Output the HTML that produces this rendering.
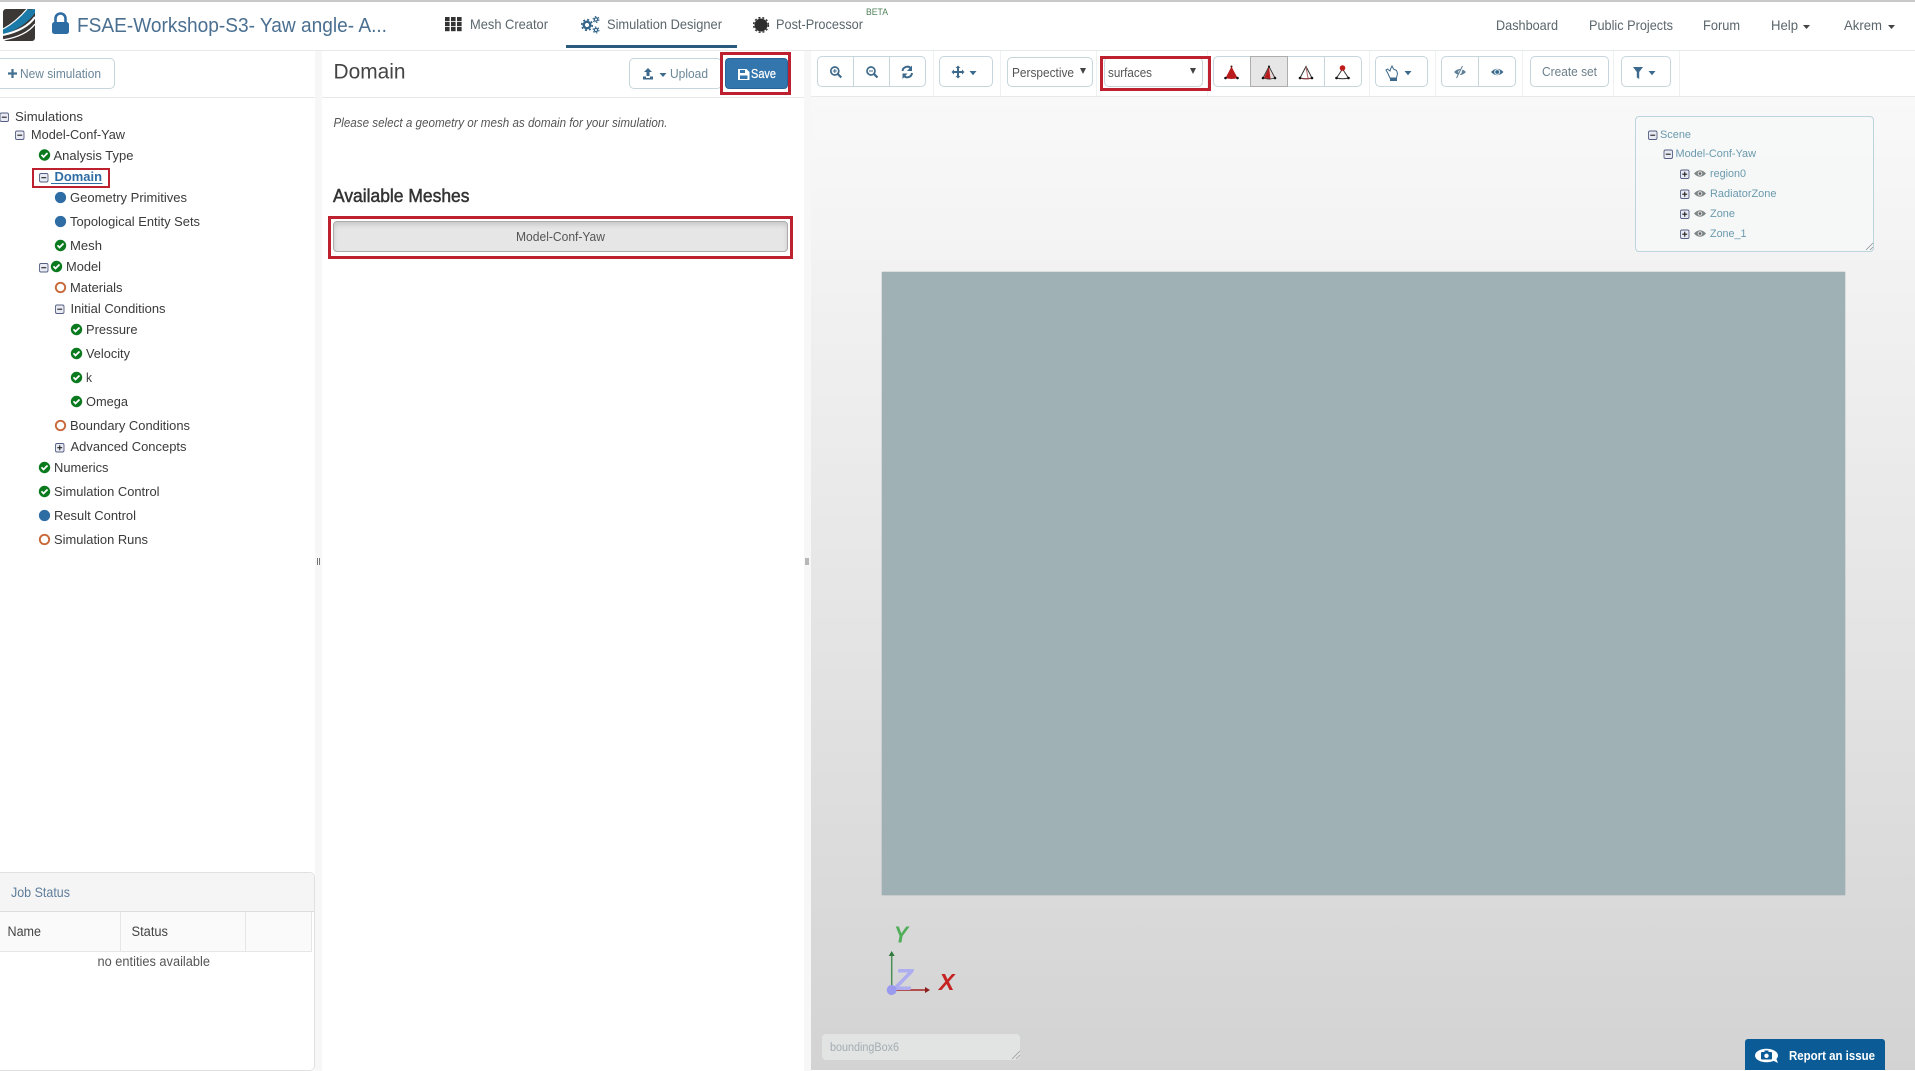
<!DOCTYPE html>
<html lang="en"><head><meta charset="utf-8"><title>Simulation Designer</title>
<style>
html,body{margin:0;padding:0;width:1915px;height:1071px;overflow:hidden;background:#fff}
.b{position:absolute;box-sizing:border-box}
.btn{border:1px solid #c6d6dc;border-radius:5px;background:#fff}
.red{border:3px solid #bd2130;background:transparent}
svg{position:absolute;left:0;top:0}
text{font-family:"Liberation Sans",Arial,sans-serif;font-size:13px;fill:#3a3a3a}
.nav{font-size:14px;fill:#5a666c}
.scene{font-size:11px;fill:#6a9aad}
.d{top:51px;width:1px;height:45px;background:#eef0f1}
</style></head><body>
<!-- backgrounds -->
<div class="b" style="left:0;top:0;width:1915px;height:2px;background:#c8c8c8"></div>
<div class="b" style="left:0;top:50px;width:1915px;height:1px;background:#e6e9ea"></div>
<div class="b" style="left:566px;top:45px;width:171px;height:3px;background:#2a5a7c"></div>
<div class="b" style="left:315px;top:51px;width:7px;height:1020px;background:#f7f7f7"></div>
<div class="b" style="left:804px;top:51px;width:7px;height:1020px;background:#f7f7f7"></div>
<div class="b" style="left:0;top:97px;width:315px;height:1px;background:#e6e9ea"></div>
<div class="b" style="left:322px;top:97px;width:482px;height:1px;background:#e6e9ea"></div>
<div class="b" style="left:811px;top:96px;width:1104px;height:974px;background:linear-gradient(#f9f9f9,#d3d3d3);border-top:1px solid #e8eaea"></div>
<div class="b" style="left:882px;top:272px;width:963px;height:623px;background:#9fb1b5;box-shadow:0 0 1px #7d8d90"></div>
<!-- toolbar dividers -->
<div class="b d" style="left:933px"></div>
<div class="b d" style="left:1000px"></div>
<div class="b d" style="left:1096px"></div>
<div class="b d" style="left:1207px"></div>
<div class="b d" style="left:1369px"></div>
<div class="b d" style="left:1435px"></div>
<div class="b d" style="left:1522px"></div>
<div class="b d" style="left:1613px"></div>
<div class="b d" style="left:1679px"></div>
<!-- left/center buttons -->
<div class="b btn" style="left:-5px;top:58px;width:120px;height:31px"></div>
<div class="b btn" style="left:629px;top:58px;width:93px;height:31px"></div>
<div class="b" style="left:725px;top:58px;width:63px;height:31px;background:#3375ad;border:1px solid #2a6496;border-radius:4px"></div>
<div class="b red" style="left:720px;top:52px;width:71px;height:43px"></div>
<div class="b" style="left:333px;top:221px;width:455px;height:31px;background:#e6e6e6;border:1px solid #adadad;border-radius:4px;box-shadow:inset 0 3px 5px rgba(0,0,0,.125)"></div>
<div class="b red" style="left:328px;top:216px;width:465px;height:43px"></div>
<div class="b red" style="left:32px;top:168px;width:78px;height:20px;border-width:2.5px"></div>
<!-- toolbar buttons -->
<div class="b btn" style="left:817px;top:56px;width:109px;height:31px"></div>
<div class="b" style="left:853px;top:56px;width:1px;height:31px;background:#c6d6dc"></div>
<div class="b" style="left:889px;top:56px;width:1px;height:31px;background:#c6d6dc"></div>
<div class="b btn" style="left:939px;top:56px;width:54px;height:31px"></div>
<div class="b btn" style="left:1007px;top:57px;width:86px;height:30px"></div>
<div class="b btn" style="left:1104px;top:57px;width:99px;height:30px"></div>
<div class="b red" style="left:1100px;top:56px;width:111px;height:35px"></div>
<div class="b btn" style="left:1213px;top:56px;width:149px;height:31px"></div>
<div class="b" style="left:1250px;top:56px;width:38px;height:31px;background:#e6e6e6;border:1px solid #adadad"></div>
<div class="b" style="left:1324px;top:56px;width:1px;height:31px;background:#c6d6dc"></div>
<div class="b btn" style="left:1375px;top:56px;width:53px;height:31px"></div>
<div class="b btn" style="left:1441px;top:56px;width:75px;height:31px"></div>
<div class="b" style="left:1478px;top:56px;width:1px;height:31px;background:#c6d6dc"></div>
<div class="b btn" style="left:1530px;top:56px;width:79px;height:31px"></div>
<div class="b btn" style="left:1621px;top:56px;width:50px;height:31px"></div>
<!-- scene panel -->
<div class="b" style="left:1635px;top:116px;width:239px;height:136px;border:1px solid #bcd4dc;border-radius:4px;background:rgba(246,247,247,.8)"></div>
<!-- bounding box -->
<div class="b" style="left:822px;top:1034px;width:198px;height:26px;background:#e2e3e3;border-radius:4px"></div>
<!-- job status -->
<div class="b" style="left:-5px;top:872px;width:320px;height:199px;border:1px solid #e0e0e0;border-radius:5px;background:#fff"></div>
<div class="b" style="left:-4px;top:873px;width:318px;height:39px;background:#f5f5f5;border-bottom:1px solid #ddd;border-radius:4px 4px 0 0"></div>
<div class="b" style="left:-4px;top:912px;width:316px;height:40px;background:#fafafa;border-bottom:1px solid #e6e6e6;border-right:1px solid #e6e6e6"></div>
<div class="b" style="left:120px;top:912px;width:1px;height:40px;background:#e6e6e6"></div>
<div class="b" style="left:245px;top:912px;width:1px;height:40px;background:#e6e6e6"></div>
<!-- report -->
<div class="b" style="left:1745px;top:1039px;width:140px;height:31px;background:#0b5c96;border-radius:3px 3px 0 0"></div>

<svg width="1915" height="1071" viewBox="0 0 1915 1071" xmlns="http://www.w3.org/2000/svg">
<defs>
<g id="ck"><circle r="5.7" fill="#0b7a1f"/><path d="M-3-.2L-1 2 3-2" fill="none" stroke="#fff" stroke-width="1.800"/></g>
<circle id="dot" r="5.600" fill="#2e6ca4"/>
<circle id="ring" r="4.700" fill="none" stroke="#c8693a" stroke-width="1.900"/>
<g id="mn"><rect x="-4" y="-4" width="8.500" height="8.500" rx="1.500" fill="#e8eaf4" stroke="#565f80" stroke-width=".9"/><path d="M-2.200.2H2.700" stroke="#222" stroke-width="1.100"/></g>
<g id="pl"><rect x="-4" y="-4" width="8.500" height="8.500" rx="1.500" fill="#e8eaf4" stroke="#565f80" stroke-width=".9"/><path d="M-2.200.2H2.700M.25-2.200V2.700" stroke="#222" stroke-width="1.100"/></g>
<g id="eye"><path d="M-6 0Q0-6.500 6 0 0 6.500-6 0Z" fill="#7d8486"/><circle r="2.300" fill="#dfe2e2"/><circle r="1.300" fill="#666"/></g>
<g id="cone"><path d="M0-6.500L6 5Q0 7-6 5Z" fill="#b81c1c"/><circle cx="-6" cy="5" r="1.300" fill="#111"/><circle cx="6" cy="5" r="1.300" fill="#111"/><circle cx="0" cy="-6.500" r="1" fill="#411"/></g>
<g id="cone2"><path d="M0-6.500L6 5Q0 7-6 5Z" fill="#e8d8d8" stroke="#333" stroke-width=".9"/><path d="M0-6L1.500 6-5 5Z" fill="#b81c1c"/><circle cx="-6" cy="5" r="1.300" fill="#111"/><circle cx="6" cy="5" r="1.300" fill="#111"/><circle cx="0" cy="-6.500" r="1" fill="#111"/></g>
<g id="cone3"><path d="M0-6.500L6 5Q0 6.500-6 5Z" fill="#fff" stroke="#333" stroke-width="1"/><path d="M0-6L2 5" stroke="#b06a6a" stroke-width="1"/><path d="M-6 5Q0 7 6 5" fill="none" stroke="#a03030" stroke-width=".8"/><circle cx="-6" cy="5" r="1.300" fill="#111"/><circle cx="6" cy="5" r="1.300" fill="#111"/></g>
<g id="cone4"><path d="M0-4L6 5Q0 6.500-6 5Z" fill="#fff" stroke="#333" stroke-width="1"/><circle cx="0" cy="-5" r="2.800" fill="#c01c1c"/><circle cx="-6" cy="5" r="1.300" fill="#111"/><circle cx="6" cy="5" r="1.300" fill="#111"/></g>
<path id="car" d="M-3.500-2H3.500L0 2.200Z" fill="#3d6a8c"/>
</defs>

<!-- logo -->
<rect x="3" y="9" width="32" height="32" rx="3" fill="#3a3735"/>
<path d="M35 9Q29 10 27 9 17 22 3 29V35Q25 27 35 13Z" fill="#1b7aa8"/>
<path d="M3 35Q26 30 35 17" fill="none" stroke="#fff" stroke-width="2"/>
<path d="M3 40Q26 36 35 24" fill="none" stroke="#fff" stroke-width="1.400"/>
<path d="M3 29Q16 22 27 9" fill="none" stroke="#fff" stroke-width="1.200"/>
<!-- lock -->
<rect x="52" y="22" width="17" height="12" rx="2.500" fill="#2e6ca4"/>
<path d="M55.500 23V18.500a5 5 0 0 1 10 0V23" fill="none" stroke="#2e6ca4" stroke-width="2.600"/>
<text x="77" y="32" style="font-size:20px;fill:#4a6f90" textLength="310" lengthAdjust="spacingAndGlyphs">FSAE-Workshop-S3- Yaw angle- A...</text>
<!-- nav -->
<g fill="#333"><rect x="445" y="17" width="4.600" height="4.200"/><rect x="451" y="17" width="4.600" height="4.200"/><rect x="457" y="17" width="4.600" height="4.200"/><rect x="445" y="22" width="4.600" height="4.200"/><rect x="451" y="22" width="4.600" height="4.200"/><rect x="457" y="22" width="4.600" height="4.200"/><rect x="445" y="27" width="4.600" height="4.200"/><rect x="451" y="27" width="4.600" height="4.200"/><rect x="457" y="27" width="4.600" height="4.200"/></g>
<text class="nav" x="470" y="29" textLength="78" lengthAdjust="spacingAndGlyphs">Mesh Creator</text>
<g fill="none" stroke="#33658a">
<circle cx="587" cy="25" r="3.300" stroke-width="2.400"/><circle cx="587" cy="25" r="5.300" stroke-width="1.600" stroke-dasharray="2 2.160"/>
<circle cx="596" cy="19.500" r="1.700" stroke-width="1.300"/><circle cx="596" cy="19.500" r="3" stroke-width="1" stroke-dasharray="1.500 1.640"/>
<circle cx="596" cy="30" r="1.700" stroke-width="1.300"/><circle cx="596" cy="30" r="3" stroke-width="1" stroke-dasharray="1.500 1.640"/>
</g>
<text class="nav" x="607" y="29" textLength="115" lengthAdjust="spacingAndGlyphs">Simulation Designer</text>
<circle cx="761" cy="25" r="6.500" fill="#2e2e2e"/><circle cx="761" cy="25" r="7.400" fill="none" stroke="#2e2e2e" stroke-width="1.400" stroke-dasharray="2 2"/>
<text class="nav" x="776" y="29" textLength="87" lengthAdjust="spacingAndGlyphs">Post-Processor</text>
<text x="866" y="15" style="font-size:9px;fill:#4f8059" textLength="22" lengthAdjust="spacingAndGlyphs">BETA</text>
<text class="nav" x="1496" y="30" textLength="62" lengthAdjust="spacingAndGlyphs">Dashboard</text>
<text class="nav" x="1589" y="30" textLength="84" lengthAdjust="spacingAndGlyphs">Public Projects</text>
<text class="nav" x="1703" y="30" textLength="37" lengthAdjust="spacingAndGlyphs">Forum</text>
<text class="nav" x="1771" y="30" textLength="27" lengthAdjust="spacingAndGlyphs">Help</text>
<path d="M1803 25h7l-3.500 4z" fill="#444"/>
<text class="nav" x="1844" y="30" textLength="38" lengthAdjust="spacingAndGlyphs">Akrem</text>
<path d="M1888 25h7l-3.500 4z" fill="#444"/>

<!-- side toolbar -->
<path d="M8 73.500H17M12.500 69V78" stroke="#44708f" stroke-width="2.200"/>
<text x="20" y="78" style="font-size:13px;fill:#6a8698" textLength="81" lengthAdjust="spacingAndGlyphs">New simulation</text>
<text x="333.500" y="78.500" style="font-size:21px;fill:#444" textLength="72" lengthAdjust="spacingAndGlyphs">Domain</text>
<path d="M648 68l-4 4h2.500v4h3v-4h2.500z" fill="#3d6a8c"/><path d="M643 76.500h3v1.500h4v-1.500h3v3h-10z" fill="#3d6a8c"/>
<path d="M659.500 73h7l-3.500 4z" fill="#3d6a8c"/>
<text x="670" y="78" style="font-size:13px;fill:#6a8698" textLength="38" lengthAdjust="spacingAndGlyphs">Upload</text>
<path d="M738 69h8.500l3 3v8h-11.500z" fill="#fff"/><rect x="740" y="70" width="5" height="3" fill="#3375ad"/><rect x="740" y="75.500" width="7.500" height="3.500" fill="#3375ad"/>
<text x="751" y="78" style="font-size:13px;fill:#fff;stroke:#fff;stroke-width:.25" textLength="25" lengthAdjust="spacingAndGlyphs">Save</text>
<text x="333.500" y="127" style="font-size:13px;font-style:italic;fill:#555" textLength="334" lengthAdjust="spacingAndGlyphs">Please select a geometry or mesh as domain for your simulation.</text>
<text x="333" y="202" style="font-size:18.500px;fill:#333;stroke:#333;stroke-width:.5" textLength="136.500" lengthAdjust="spacingAndGlyphs">Available Meshes</text>
<text x="516" y="241" style="font-size:13px;fill:#555" textLength="89" lengthAdjust="spacingAndGlyphs">Model-Conf-Yaw</text>

<!-- tree -->
<use href="#mn" x="4" y="117"/><text x="15" y="121" textLength="68" lengthAdjust="spacingAndGlyphs">Simulations</text>
<use href="#mn" x="19.500" y="135"/><text x="31" y="139" textLength="94" lengthAdjust="spacingAndGlyphs">Model-Conf-Yaw</text>
<use href="#ck" x="44.500" y="155"/><text x="53.500" y="160" textLength="80" lengthAdjust="spacingAndGlyphs">Analysis Type</text>
<use href="#mn" x="43.500" y="177.500"/><text x="54.500" y="181" style="font-size:13px;font-weight:bold;fill:#2e6ca4" textLength="47.500" lengthAdjust="spacingAndGlyphs">Domain</text><path d="M51 183.500H102.500" stroke="#2e6ca4" stroke-width="1"/>
<use href="#dot" x="60.500" y="197.500"/><text x="70" y="202" textLength="117" lengthAdjust="spacingAndGlyphs">Geometry Primitives</text>
<use href="#dot" x="60.500" y="221.500"/><text x="70" y="226" textLength="130" lengthAdjust="spacingAndGlyphs">Topological Entity Sets</text>
<use href="#ck" x="60.500" y="245.500"/><text x="70" y="250" textLength="32" lengthAdjust="spacingAndGlyphs">Mesh</text>
<use href="#mn" x="43.500" y="267.500"/><use href="#ck" x="56.500" y="266.500"/><text x="66" y="271" textLength="35" lengthAdjust="spacingAndGlyphs">Model</text>
<use href="#ring" x="60.500" y="287.500"/><text x="70" y="292" textLength="52.500" lengthAdjust="spacingAndGlyphs">Materials</text>
<use href="#mn" x="59.500" y="309"/><text x="70.500" y="313" textLength="95" lengthAdjust="spacingAndGlyphs">Initial Conditions</text>
<use href="#ck" x="76.500" y="329.500"/><text x="86" y="334" textLength="51.500" lengthAdjust="spacingAndGlyphs">Pressure</text>
<use href="#ck" x="76.500" y="353.500"/><text x="86" y="358" textLength="44" lengthAdjust="spacingAndGlyphs">Velocity</text>
<use href="#ck" x="76.500" y="377.500"/><text x="86" y="382" textLength="6" lengthAdjust="spacingAndGlyphs">k</text>
<use href="#ck" x="76.500" y="401.500"/><text x="86" y="406" textLength="42" lengthAdjust="spacingAndGlyphs">Omega</text>
<use href="#ring" x="60.500" y="425.500"/><text x="70" y="430" textLength="120" lengthAdjust="spacingAndGlyphs">Boundary Conditions</text>
<use href="#pl" x="59.500" y="447.500"/><text x="70.500" y="451" textLength="116" lengthAdjust="spacingAndGlyphs">Advanced Concepts</text>
<use href="#ck" x="44.500" y="467.500"/><text x="54" y="472" textLength="54.500" lengthAdjust="spacingAndGlyphs">Numerics</text>
<use href="#ck" x="44.500" y="491.500"/><text x="54" y="496" textLength="105.500" lengthAdjust="spacingAndGlyphs">Simulation Control</text>
<use href="#dot" x="44.500" y="515.500"/><text x="54" y="520" textLength="82" lengthAdjust="spacingAndGlyphs">Result Control</text>
<use href="#ring" x="44.500" y="539.500"/><text x="54" y="544" textLength="94" lengthAdjust="spacingAndGlyphs">Simulation Runs</text>
<path d="M317.500 558v7M319.500 558v7M806 558v7M808 558v7" stroke="#777" stroke-width="1"/>

<!-- job status -->
<text x="11" y="897" style="font-size:14px;fill:#5f7d9b" textLength="59" lengthAdjust="spacingAndGlyphs">Job Status</text>
<text x="7.500" y="936" style="font-size:13.500px;fill:#444" textLength="33.500" lengthAdjust="spacingAndGlyphs">Name</text>
<text x="131.500" y="936" style="font-size:13.500px;fill:#444" textLength="36.500" lengthAdjust="spacingAndGlyphs">Status</text>
<text x="97.500" y="966" style="font-size:13.500px;fill:#555" textLength="112.500" lengthAdjust="spacingAndGlyphs">no entities available</text>

<!-- toolbar icons -->
<g fill="none" stroke="#3d6a8c">
<circle cx="834.800" cy="71" r="4" stroke-width="1.700"/><path d="M837.800 74l3.500 3.500" stroke-width="2.200"/><path d="M832.800 71h4M834.800 69v4" stroke-width="1"/>
<circle cx="871" cy="71" r="4" stroke-width="1.700"/><path d="M874 74l3.500 3.500" stroke-width="2.200"/><path d="M869 71h4" stroke-width="1"/>
<path d="M902.500 71a4.800 4.800 0 0 1 8.500-2.500M912 73a4.800 4.800 0 0 1-8.500 2.500" stroke-width="2"/>
<path d="M958 67v10M953 72h10" stroke-width="2"/>
</g>
<path d="M912 65.500v5.500h-5zM902.500 79v-5.500h5zM958 65.500l-2.500 2.500h5zM958 78.500l-2.500-2.500h5zM951.500 72l2.500-2.500v5zM964.500 72l-2.500-2.500v5z" fill="#3d6a8c"/>
<use href="#car" x="973" y="73"/>
<text x="1012" y="77" style="font-size:12.500px;fill:#555" textLength="62" lengthAdjust="spacingAndGlyphs">Perspective</text>
<path d="M1080 68h6l-3 6z" fill="#444"/>
<text x="1108" y="77" style="font-size:12.500px;fill:#555" textLength="44" lengthAdjust="spacingAndGlyphs">surfaces</text>
<path d="M1190 68h6l-3 6z" fill="#444"/>
<use href="#cone" x="1231.500" y="73"/><use href="#cone2" x="1269" y="73"/><use href="#cone3" x="1306" y="73"/><use href="#cone4" x="1342.500" y="73"/>
<path d="M1390 78l-2.500-5.500-1.500-2.500 1.500-1 2.500 2 .5-2 1.500-3 1.500 3 3 1.500 1 3-1 4.500z" fill="#fff" stroke="#3d6a8c" stroke-width="1"/><rect x="1390" y="77.500" width="7" height="3.500" fill="#3d6a8c"/>
<use href="#car" x="1408" y="73"/>
<path d="M1454 72q6-6 12 0-6 6-12 0z" fill="#5f7f96"/><circle cx="1460" cy="72" r="1.800" fill="#fff"/><path d="M1463.500 66l-6 12" stroke="#fff" stroke-width="1.600"/><path d="M1462.500 66l-6 12" stroke="#5f7f96" stroke-width="1"/>
<path d="M1491 72q6.200-6.500 12.500 0-6.300 6.500-12.500 0z" fill="#3d6a8c"/><circle cx="1497.200" cy="72" r="3" fill="#e3ecf1"/><circle cx="1497.200" cy="72" r="1.900" fill="#3d6a8c"/>
<text x="1542" y="76" style="font-size:13px;fill:#6b7f8a" textLength="55" lengthAdjust="spacingAndGlyphs">Create set</text>
<path d="M1633 67h10l-3.800 5v7l-2.400-1.500v-5.500z" fill="#3d6a8c"/>
<use href="#car" x="1652" y="73"/>

<!-- scene tree -->
<use href="#mn" x="1652.500" y="135"/><text class="scene" x="1660" y="138" textLength="31" lengthAdjust="spacingAndGlyphs">Scene</text>
<use href="#mn" x="1668" y="154"/><text class="scene" x="1675.500" y="157" textLength="80.500" lengthAdjust="spacingAndGlyphs">Model-Conf-Yaw</text>
<use href="#pl" x="1684.500" y="174"/><use href="#eye" x="1700" y="173.500"/><text class="scene" x="1710" y="177" textLength="36" lengthAdjust="spacingAndGlyphs">region0</text>
<use href="#pl" x="1684.500" y="194"/><use href="#eye" x="1700" y="193.500"/><text class="scene" x="1710" y="197" textLength="66.500" lengthAdjust="spacingAndGlyphs">RadiatorZone</text>
<use href="#pl" x="1684.500" y="214"/><use href="#eye" x="1700" y="213.500"/><text class="scene" x="1710" y="217" textLength="25" lengthAdjust="spacingAndGlyphs">Zone</text>
<use href="#pl" x="1684.500" y="234"/><use href="#eye" x="1700" y="233.500"/><text class="scene" x="1710" y="237" textLength="36.500" lengthAdjust="spacingAndGlyphs">Zone_1</text>
<path d="M1866 250l7-7M1870 250l3-3" stroke="#8a9599" stroke-width=".8"/>

<!-- axes -->
<path d="M891.700 990V955" stroke="#4a8f55" stroke-width="1.500"/><path d="M891.700 951l-3 5h6z" fill="#2f7a3c"/>
<path d="M892 990H926" stroke="#a82222" stroke-width="1.500"/><path d="M930 990l-5-3v6z" fill="#8a1f1f"/>
<text x="894" y="942.500" style="font-size:23px;font-weight:bold;font-style:italic;fill:#50ad5a" textLength="14" lengthAdjust="spacingAndGlyphs">Y</text>
<text x="894" y="990" style="font-size:31px;font-weight:bold;font-style:italic;fill:#adadf0" textLength="19" lengthAdjust="spacingAndGlyphs">Z</text>
<circle cx="891.700" cy="990" r="5" fill="#9a9aee"/>
<text x="939" y="990" style="font-size:23px;font-weight:bold;font-style:italic;fill:#c52222" textLength="15.500" lengthAdjust="spacingAndGlyphs">X</text>

<text x="830" y="1051" style="font-size:11.500px;fill:#a3adb3" textLength="69" lengthAdjust="spacingAndGlyphs">boundingBox6</text>
<path d="M1012 1059l8-8M1016 1059l4-4" stroke="#9a9fa3" stroke-width=".8"/>

<!-- report -->
<ellipse cx="1766.500" cy="1055.500" rx="11.500" ry="6.800" fill="#fff"/><path d="M1772 1060l6 3-2-5z" fill="#fff"/>
<rect x="1761" y="1052" width="11" height="7.500" rx="1" fill="#0b5c96"/><circle cx="1766.500" cy="1055.800" r="2.200" fill="#fff"/><rect x="1764.500" y="1050.500" width="4" height="2" fill="#0b5c96"/>
<text x="1789" y="1060" style="font-size:12.500px;font-weight:bold;fill:#fff" textLength="86" lengthAdjust="spacingAndGlyphs">Report an issue</text>
</svg>
</body></html>
